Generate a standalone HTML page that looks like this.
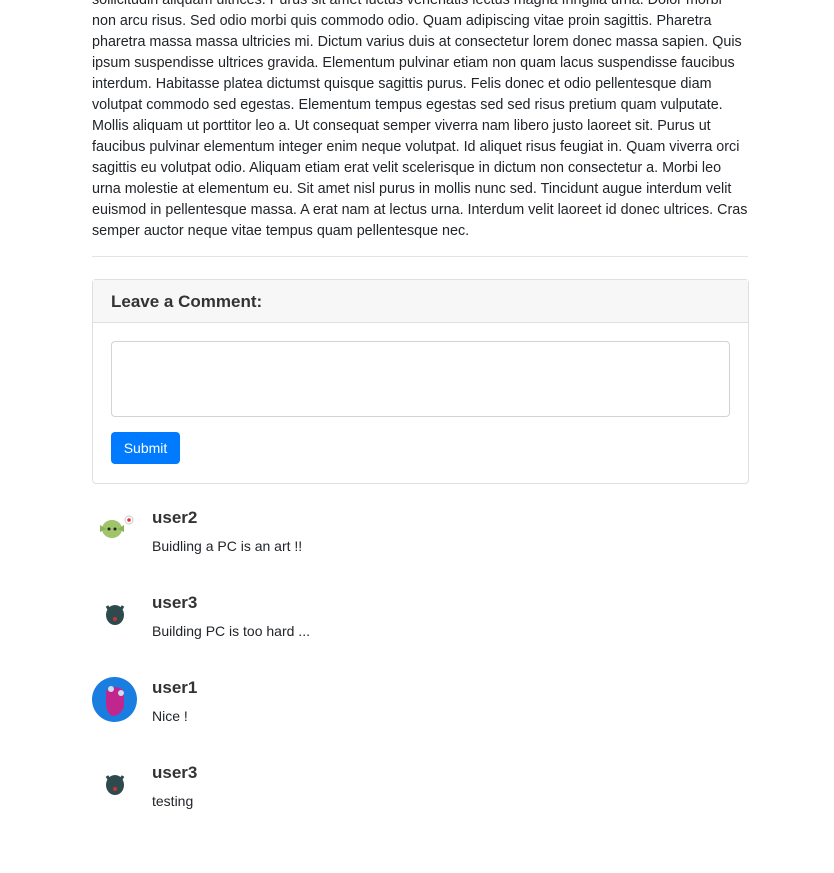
<!DOCTYPE html>
<html><head><meta charset="utf-8"><style>
body{margin:0;background:#fff;font-family:"Liberation Sans",sans-serif;color:#212529;width:834px;height:873px;overflow:hidden;position:relative}
.t{position:absolute;left:92px;top:-10px;font-size:14.35px;line-height:21px;white-space:nowrap}
hr{position:absolute;left:92px;top:256px;width:656px;margin:0;border:0;border-top:1px solid #e3e3e3}
.card{position:absolute;left:92px;top:279px;width:655px;height:203px;border:1px solid #dfdfdf;border-radius:4px}
.hd{height:42px;background:#f7f7f7;border-bottom:1px solid #dfdfdf;font-size:17px;font-weight:bold;color:#333;line-height:44px;padding-left:18px}
.ta{position:absolute;left:18px;top:61px;width:617px;height:74px;border:1px solid #ced4da;border-radius:4px}
.btn{position:absolute;left:18px;top:152px;width:69px;height:32px;background:#007bff;border-radius:4px;color:#fff;font-size:14px;line-height:32px;text-align:center}
.c{position:absolute;left:92px;width:500px;height:60px}
.av{position:absolute;left:0;top:0;width:45px;height:45px}
.u{position:absolute;left:60px;top:1px;font-size:17px;font-weight:bold;color:#333}
.m{position:absolute;left:60px;top:31px;font-size:14px}
</style></head><body>
<div class="t">sollicitudin aliquam ultrices. Purus sit amet luctus venenatis lectus magna fringilla urna. Dolor morbi<br>non arcu risus. Sed odio morbi quis commodo odio. Quam adipiscing vitae proin sagittis. Pharetra<br>pharetra massa massa ultricies mi. Dictum varius duis at consectetur lorem donec massa sapien. Quis<br>ipsum suspendisse ultrices gravida. Elementum pulvinar etiam non quam lacus suspendisse faucibus<br>interdum. Habitasse platea dictumst quisque sagittis purus. Felis donec et odio pellentesque diam<br>volutpat commodo sed egestas. Elementum tempus egestas sed sed risus pretium quam vulputate.<br>Mollis aliquam ut porttitor leo a. Ut consequat semper viverra nam libero justo laoreet sit. Purus ut<br>faucibus pulvinar elementum integer enim neque volutpat. Id aliquet risus feugiat in. Quam viverra orci<br>sagittis eu volutpat odio. Aliquam etiam erat velit scelerisque in dictum non consectetur a. Morbi leo<br>urna molestie at elementum eu. Sit amet nisl purus in mollis nunc sed. Tincidunt augue interdum velit<br>euismod in pellentesque massa. A erat nam at lectus urna. Interdum velit laoreet id donec ultrices. Cras<br>semper auctor neque vitae tempus quam pellentesque nec.</div>
<hr>
<div class="card"><div class="hd">Leave a Comment:</div><div class="ta"></div><div class="btn">Submit</div></div>

<div class="c" style="top:507px"><svg class="av" viewBox="0 0 45 45"><ellipse cx="20" cy="22" rx="10" ry="9" fill="#9fc46a"/><path d="M8 18l6 4-6 3zM32 18l-6 4 6 3z" fill="#8ab35a"/><circle cx="17" cy="22" r="1.5" fill="#222"/><circle cx="23" cy="22" r="1.5" fill="#222"/><circle cx="37" cy="13" r="4" fill="#fff" stroke="#ccc"/><circle cx="37" cy="13" r="1.8" fill="#d33"/></svg><div class="u">user2</div><div class="m">Buidling a PC is an art !!</div></div>

<div class="c" style="top:592px"><svg class="av" viewBox="0 0 45 45"><ellipse cx="23" cy="23" rx="9" ry="10" fill="#2f4a4d"/><path d="M15 14l3 5M31 14l-3 5" stroke="#2f4a4d" stroke-width="3"/><circle cx="23" cy="27" r="2" fill="#c33"/></svg><div class="u">user3</div><div class="m">Building PC is too hard ...</div></div>

<div class="c" style="top:677px"><svg class="av" viewBox="0 0 45 45"><circle cx="22.5" cy="22.5" r="22.5" fill="#1a7ee0"/><path d="M14 14q9-8 18 0v16q-4 9-12 9-6-4-6-12z" fill="#c0268e"/><circle cx="19" cy="12" r="3" fill="#cde"/><circle cx="29" cy="16" r="3" fill="#cde"/></svg><div class="u">user1</div><div class="m">Nice !</div></div>

<div class="c" style="top:762px"><svg class="av" viewBox="0 0 45 45"><ellipse cx="23" cy="23" rx="9" ry="10" fill="#2f4a4d"/><path d="M15 14l3 5M31 14l-3 5" stroke="#2f4a4d" stroke-width="3"/><circle cx="23" cy="27" r="2" fill="#c33"/></svg><div class="u">user3</div><div class="m">testing</div></div>
</body></html>
